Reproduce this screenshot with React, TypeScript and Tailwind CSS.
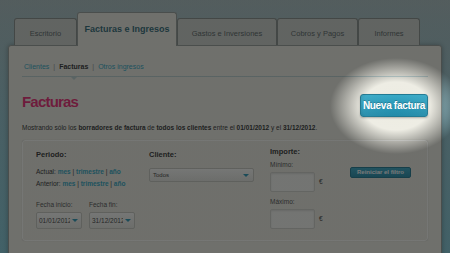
import React from "react";

const tabs = [
  { label: "Escritorio", width: "w-[63px]", active: false },
  { label: "Facturas e Ingresos", width: "w-[100px]", active: true },
  { label: "Gastos e Inversiones", width: "w-[100px]", active: false },
  { label: "Cobros y Pagos", width: "w-[81px]", active: false },
  { label: "Informes", width: "w-[62px]", active: false },
];

function Caret() {
  return <span className="h-0 w-0 border-x-[3px] border-t-[3.5px] border-x-transparent border-t-[#1b8fb0]" />;
}

function DateSelect({ value }: { value: string }) {
  return (
    <div className="flex h-[17px] w-[46px] items-center justify-between rounded-[2px] border border-[#c4c4bc] bg-[linear-gradient(#fbfbf8,#e4e4de)] pl-[2px] pr-[3px]">
      <span className="w-[31px] overflow-hidden whitespace-nowrap text-[6.5px] text-[#333]">{value}</span>
      <Caret />
    </div>
  );
}

function AmountInput() {
  return (
    <div className="flex items-center gap-[4px]">
      <div className="h-[20px] w-[45px] rounded-[2px] border border-[#cfcfc8] bg-[#f6f6f1] shadow-[inset_0_1px_2px_rgba(0,0,0,0.12)]" />
      <span className="text-[6.5px] text-[#333]">€</span>
    </div>
  );
}

function Link({ children }: { children: React.ReactNode }) {
  return <span className="font-bold text-[#1ba0bd]">{children}</span>;
}

export default function App() {
  return (
    <div className="relative h-[253px] w-[450px] overflow-hidden bg-[linear-gradient(180deg,#a6bbbd_0%,#8ec2cd_45%,#7bc6d6_100%)] font-['Liberation_Sans',Arial,sans-serif]">
      {/* tabs */}
      <div className="flex items-end pl-[14px] pt-[12px]">
        {tabs.map((tab) =>
          tab.active ? (
            <div
              key={tab.label}
              className={`relative z-10 -mb-px flex h-[34px] ${tab.width} items-center justify-center rounded-t-[3px] border border-b-0 border-[#8f9692] bg-[#ecebe1] pt-[1px] text-[9px] font-bold text-[#1d5d6c]`}
            >
              {tab.label}
            </div>
          ) : (
            <div
              key={tab.label}
              className={`flex h-[27px] ${tab.width} items-center justify-center rounded-t-[3px] border border-b-0 border-[#7f8682] bg-[#c9cdc7] pt-[3px] text-[7.5px] text-[#4d5757]`}
            >
              {tab.label}
            </div>
          ),
        )}
      </div>

      {/* panel */}
      <div className="mx-[8px] rounded-t-[3px] border border-[#8f9692] bg-[#ecebe1] px-[13px] pb-[20px] pt-[16px] shadow-[0_0_5px_rgba(0,0,0,0.35)]">
        <div className="flex items-center border-b border-[#b6cccc] pb-[5px] pl-[2px] text-[7px] leading-[9px]">
          <span className="text-[#1ba0bd]">Clientes</span>
          <span className="mx-[4px] text-[#888]">|</span>
          <span className="relative font-bold text-[#222]">
            Facturas
            <span className="absolute left-1/2 top-[14px] h-0 w-0 -translate-x-1/2 border-x-[4px] border-t-[4px] border-x-transparent border-t-[#b6cccc]" />
          </span>
          <span className="mx-[4px] text-[#888]">|</span>
          <span className="text-[#1ba0bd]">Otros ingresos</span>
        </div>

        <div className="mt-[17px] flex items-start justify-between">
          <h1 className="-mt-[1.5px] text-[15px] font-bold leading-[18px] tracking-[-0.8px] text-[#e8186a]">Facturas</h1>
          <button
            type="button"
            className="h-[23px] w-[68px] rounded-[3px] border border-[#0f6f8a] bg-[linear-gradient(#2aa3c2,#1483a3)] text-[10px] font-bold tracking-[-0.3px] text-white shadow-[0_1px_2px_rgba(0,0,0,0.3)] [text-shadow:0_-1px_0_rgba(0,0,0,0.25)]"
          >
            Nueva factura
          </button>
        </div>

        <p className="mt-[7px] text-[6.5px] leading-[8px] text-[#222]">
          Mostrando sólo los <b>borradores de factura</b> de <b>todos los clientes</b> entre el <b>01/01/2012</b> y el{" "}
          <b>31/12/2012</b>.
        </p>

        {/* filter */}
        <div className="mt-[8px] flex h-[101px] rounded-[3px] border border-[#fbfbf6] bg-[#ebe9df] pl-[13px] shadow-[0_0_1px_rgba(0,0,0,0.25)]">
          <div className="w-[113px] pt-[9px] text-[#222]">
            <div className="text-[7.5px] font-bold leading-[9px]">Periodo:</div>
            <div className="mt-[9px] text-[6.5px] leading-[8px]">
              Actual: <Link>mes</Link> | <Link>trimestre</Link> | <Link>año</Link>
            </div>
            <div className="mt-[4px] text-[6.5px] leading-[8px]">
              Anterior: <Link>mes</Link> | <Link>trimestre</Link> | <Link>año</Link>
            </div>
            <div className="mt-[13px] flex gap-[7px]">
              <div className="flex flex-col gap-[3px]">
                <span className="text-[6.5px] leading-[8px] text-[#444]">Fecha inicio:</span>
                <DateSelect value="01/01/2012" />
              </div>
              <div className="flex flex-col gap-[3px]">
                <span className="text-[6.5px] leading-[8px] text-[#444]">Fecha fin:</span>
                <DateSelect value="31/12/2012" />
              </div>
            </div>
          </div>

          <div className="w-[121px] pt-[9px] text-[#222]">
            <div className="text-[7.5px] font-bold leading-[9px]">Cliente:</div>
            <div className="mt-[9px] flex h-[14px] w-[105px] items-center justify-between rounded-[2px] border border-[#c4c4bc] bg-[linear-gradient(#fbfbf8,#e4e4de)] pl-[3px] pr-[4px]">
              <span className="text-[6px] text-[#333]">Todos</span>
              <Caret />
            </div>
          </div>

          <div className="w-[80px] pt-[6px] text-[#222]">
            <div className="text-[7.5px] font-bold leading-[9px]">Importe:</div>
            <div className="mt-[5px] text-[6.5px] leading-[8px] text-[#444]">Mínimo:</div>
            <div className="mt-[3px]">
              <AmountInput />
            </div>
            <div className="mt-[6px] text-[6.5px] leading-[8px] text-[#444]">Máximo:</div>
            <div className="mt-[3px]">
              <AmountInput />
            </div>
          </div>

          <div className="pt-[16px]">
            <button
              type="button"
              className="h-[11px] w-[61px] rounded-[2px] border border-[#0f6f8a] bg-[linear-gradient(#2aa3c2,#1483a3)] text-[6px] font-bold leading-[9px] text-white"
            >
              Reiniciar el filtro
            </button>
          </div>
        </div>
      </div>

      {/* spotlight overlay */}
      <div className="pointer-events-none absolute inset-0 z-20 bg-[radial-gradient(ellipse_66px_48px_at_396px_106px,rgba(255,255,255,0.04)_0%,rgba(255,255,255,0.1)_50%,rgba(28,30,30,0.6)_100%)]" />
    </div>
  );
}
